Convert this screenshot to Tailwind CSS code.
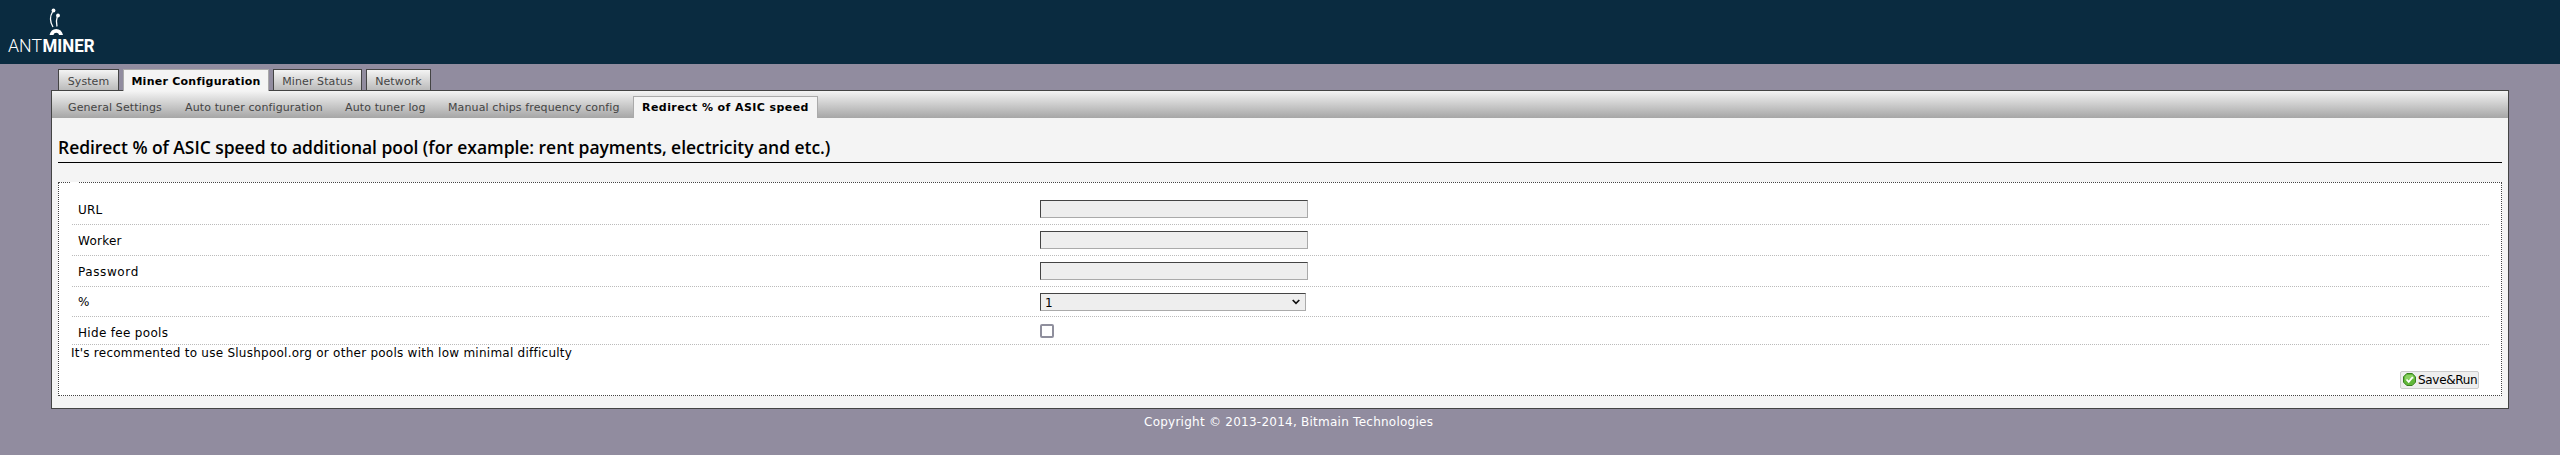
<!DOCTYPE html>
<html lang="en"><head><meta charset="utf-8"><title>Antminer</title>
<script src="https://cdn.jsdelivr.net/npm/@tailwindcss/browser@4"></script></head>
<body class="bg-[#918c9f] w-[2560px] h-[455px] overflow-hidden font-['Verdana','DejaVu_Sans',sans-serif] text-[12px] leading-[16px] text-black">
<header class="h-16 bg-[#0a2b40]">
<svg class="block" width="130" height="64" viewBox="0 0 130 64" fill="none" stroke="#fff">
<path d="M49.500 35a7 8.200 0 0 1 13.500 0h-4c-.5-3-5-3-5.500 0z" fill="#fff" stroke="none"/>
<path d="M53 27C50 22 50 16 52.500 12M57 26.500c-1-4-.8-7 .3-10" stroke-width="1.300"/>
<circle cx="53.500" cy="10.500" r="1.900" fill="#fff" stroke="none"/><circle cx="58" cy="15.500" r="1.900" fill="#fff" stroke="none"/>
<text x="8" y="52.200" font-family="Roboto,sans-serif" font-size="19" font-weight="300" fill="#fff" stroke="none" textLength="34" lengthAdjust="spacingAndGlyphs">ANT</text>
<text x="42.500" y="52.200" font-family="Roboto,sans-serif" font-size="19" font-weight="700" fill="#fff" stroke="none" textLength="52" lengthAdjust="spacingAndGlyphs">MINER</text>
</svg>
</header>
<nav class="relative z-10 flex pt-[5px] pl-[58px] gap-1 h-[27px] text-[11px] leading-[23px] tracking-[0.1px] text-[#444] whitespace-nowrap">
<a class="w-[61px] h-[21px] text-center border border-b-0 border-[#444] bg-linear-to-b from-[#f4f4f4] to-[#bbb]">System</a>
<a class="w-[146px] h-[22px] text-center border border-b-0 border-[#aaa] bg-[#f4f4f4] font-bold tracking-[0.26px] text-black">Miner Configuration</a>
<a class="w-[89px] h-[21px] text-center border border-b-0 border-[#444] bg-linear-to-b from-[#f4f4f4] to-[#bbb]">Miner Status</a>
<a class="w-[65px] h-[21px] text-center border border-b-0 border-[#444] bg-linear-to-b from-[#f4f4f4] to-[#bbb]">Network</a>
</nav>
<main class="-mt-[1px] ml-[51px] w-[2458px] h-[319px] border border-[#444] bg-[#f4f4f4]">
<nav class="flex h-[27px] pt-[5px] pl-4 bg-linear-to-b from-[#f4f4f4] to-[#a6a6a6] text-[11px] leading-[24px] tracking-[0.12px] text-[#444] whitespace-nowrap">
<a class="w-[117px]">General Settings</a><a class="w-[160px]">Auto tuner configuration</a><a class="w-[103px]">Auto tuner log</a><a class="w-[185px]">Manual chips frequency config</a>
<a class="w-[185px] h-[22px] leading-[22px] text-center border border-b-0 border-[#aaa] bg-[#f4f4f4] font-bold tracking-[0.42px] text-black">Redirect % of ASIC speed</a>
</nav>
<h2 class="mx-[6px] h-[45px] pt-[15px] border-b border-black font-['Trebuchet_MS','Open_Sans',sans-serif] text-[17.5px] leading-[28px] font-semibold tracking-[-0.05px] whitespace-nowrap">Redirect % of ASIC speed to additional pool (for example: rent payments, electricity and etc.)</h2>
<fieldset class="mx-[6px] mt-[19px] h-[214px] w-[2444px] bg-white border border-dotted border-[#444] pl-[13px] pr-[12px] tracking-[0.25px]">
<legend class="w-[7px] h-px bg-white ml-[-1px]"></legend>
<div class="h-[42px] pt-[17px] pl-[6px] flex border-b border-dotted border-[#bbb]"><label class="w-[962px] pt-[2px]">URL</label><input class="block w-[268px] h-[18px] bg-[#eee] border border-t-[#444] border-l-[#444] border-b-[#aaa] border-r-[#aaa]"></div>
<div class="h-[31px] pt-[6px] pl-[6px] flex border-b border-dotted border-[#bbb]"><label class="w-[962px] pt-[2px]">Worker</label><input class="block w-[268px] h-[18px] bg-[#eee] border border-t-[#444] border-l-[#444] border-b-[#aaa] border-r-[#aaa]"></div>
<div class="h-[31px] pt-[6px] pl-[6px] flex border-b border-dotted border-[#bbb]"><label class="w-[962px] pt-[2px] tracking-[0.6px]">Password</label><input class="block w-[268px] h-[18px] bg-[#eee] border border-t-[#444] border-l-[#444] border-b-[#aaa] border-r-[#aaa]"></div>
<div class="h-[30px] pt-[6px] pl-[6px] flex border-b border-dotted border-[#bbb]"><label class="w-[962px] pt-[1px]">%</label><div class="w-[266px] h-[18px] pl-1 pr-[5px] flex items-center justify-between bg-[#eee] border border-t-[#444] border-l-[#444] border-b-[#aaa] border-r-[#aaa]"><span class="pt-px">1</span><svg width="8" height="6" viewBox="0 0 8 6" fill="none" stroke="#111" stroke-width="1.700"><path d="M.7 1 4 4.300 7.300 1"/></svg></div></div>
<div class="h-[28px] pt-[7px] pl-[6px] flex border-b border-dotted border-[#bbb]"><label class="w-[962px] pt-px tracking-[0.32px]">Hide fee pools</label><span class="size-[14px] bg-white border-2 border-[#8f8f9d] rounded-[2px]"></span></div>
<p class="-ml-px h-[26px] whitespace-nowrap">It's recommented to use Slushpool.org or other pools with low minimal difficulty</p>
<div class="flex justify-end pr-[10px]"><button class="w-[79px] h-[18px] flex items-center border border-[#ccc] rounded-[2px] bg-[#eee] pl-[2px] whitespace-nowrap"><svg class="mr-[2px] -mt-px shrink-0" width="13" height="13" viewBox="0 0 13 13"><path d="M3.800.5h5.400l3.300 3.300v5.400l-3.300 3.300H3.800L.5 9.200V3.800z" fill="#62b83a" stroke="#397f20"/><path d="M3.500 2h6L11 4v2L2 7V4z" fill="#8ad161"/><path d="m3.500 6.500 2.200 2.300L9.800 4" fill="none" stroke="#fff" stroke-width="1.800"/></svg><span class="tracking-[-0.3px]">Save&amp;Run</span></button></div>
</fieldset>
</main>
<footer class="pl-[1144px] pt-[5px] tracking-[0.25px] text-white whitespace-nowrap">Copyright © 2013-2014, Bitmain Technologies</footer>
</body></html>
